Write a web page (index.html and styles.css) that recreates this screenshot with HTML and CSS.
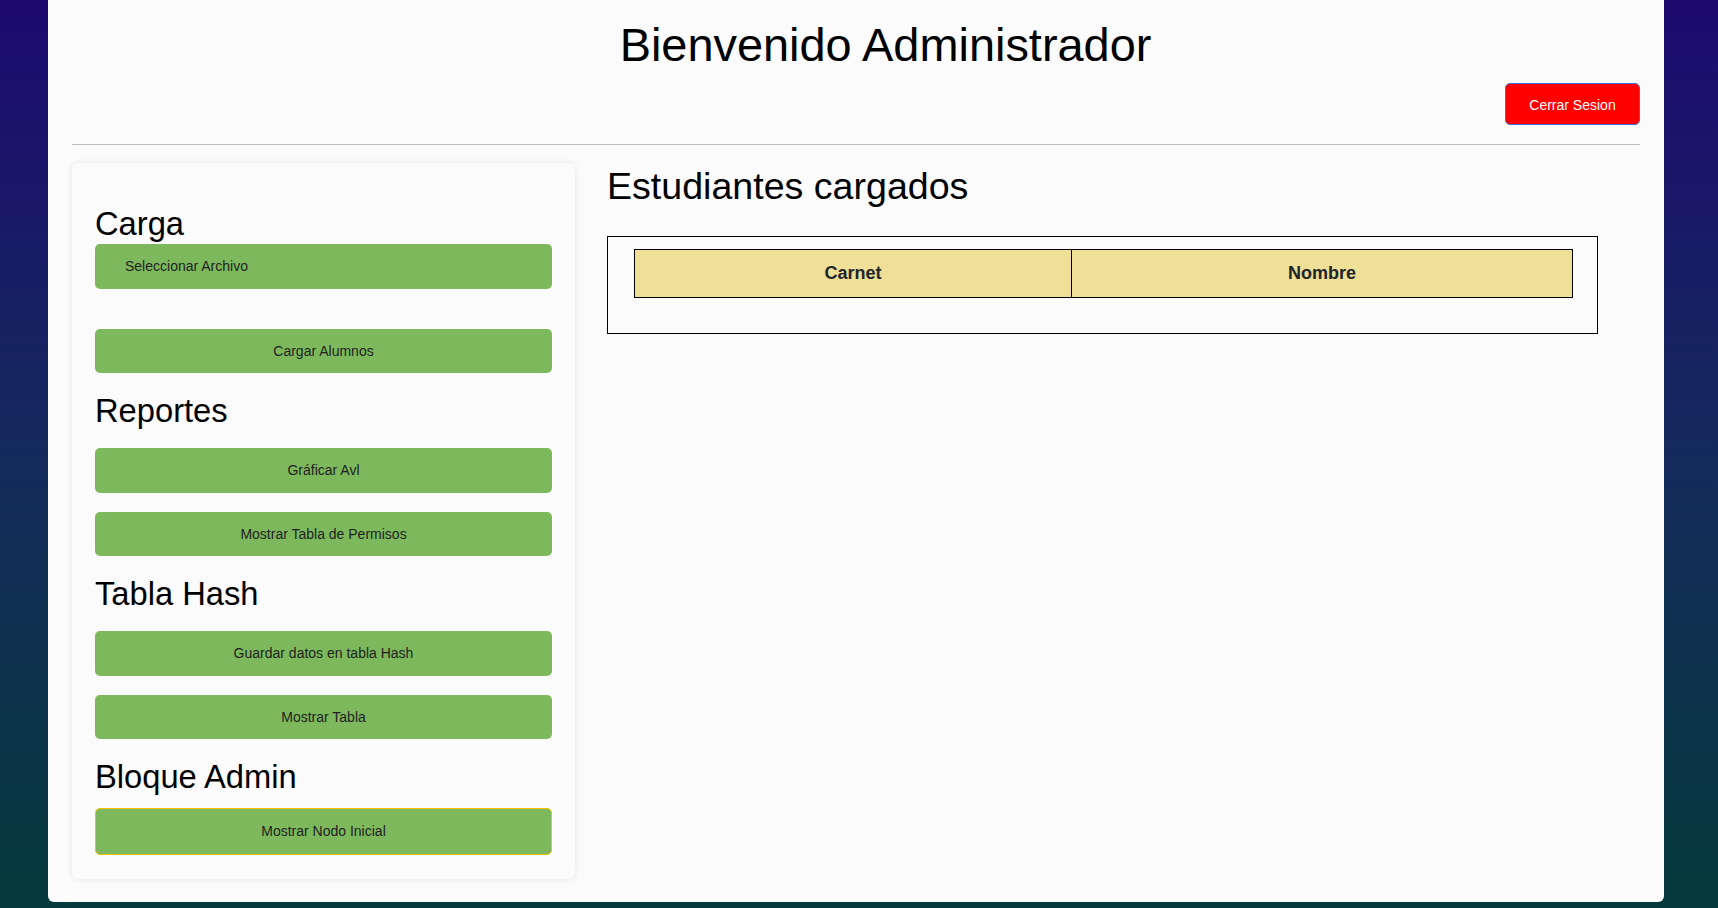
FILE: index.html
```html
<!DOCTYPE html>
<html lang="es">
<head>
<meta charset="utf-8">
<title>Administrador</title>
<link rel="stylesheet" href="styles.css">
</head>
<body>
<div class="panel">
  <header class="top">
    <h1 class="title">Bienvenido Administrador</h1>
    <div class="logout-row"><button class="logout">Cerrar Sesion</button></div>
  </header>
  <hr class="divider">
  <div class="main">
    <aside class="card">
      <h2 class="sec sec-first">Carga</h2>
      <label class="btn btn-file">Seleccionar Archivo</label>
      <button class="btn">Cargar Alumnos</button>
      <h2 class="sec">Reportes</h2>
      <button class="btn">Gráficar Avl</button>
      <button class="btn">Mostrar Tabla de Permisos</button>
      <h2 class="sec">Tabla Hash</h2>
      <button class="btn">Guardar datos en tabla Hash</button>
      <button class="btn">Mostrar Tabla</button>
      <h2 class="sec sec-last">Bloque Admin</h2>
      <button class="btn btn-node">Mostrar Nodo Inicial</button>
    </aside>
    <section class="content">
      <h2 class="content-title">Estudiantes cargados</h2>
      <div class="table-box">
        <table class="students">
          <colgroup><col class="col-carnet"><col class="col-nombre"></colgroup>
          <thead>
            <tr><th>Carnet</th><th>Nombre</th></tr>
          </thead>
          <tbody></tbody>
        </table>
      </div>
    </section>
  </div>
</div>
</body>
</html>
```
FILE: styles.css
```css
* { box-sizing: border-box; }

html, body {
  margin: 0;
  height: 908px;
}

body {
  background: linear-gradient(180deg, #1d0a70 0%, #142a5c 50%, #053a3c 100%);
  font-family: "Liberation Sans", Arial, sans-serif;
  overflow: hidden;
}

.panel {
  margin-left: 48px;
  width: 1616px;
  height: 901.5px;
  background: #fbfbfb;
  border-radius: 0 0 6px 6px;
  padding: 0 24px;
}

.top {
  display: flex;
  flex-direction: column;
}

.title {
  margin: 18px 0 0;
  padding-left: 59px;
  font-size: 46.9px;
  line-height: 54px;
  font-weight: 400;
  text-align: center;
  color: #000;
}

.logout-row {
  display: flex;
  justify-content: flex-end;
  margin-top: 11px;
}

.logout {
  width: 135px;
  height: 42px;
  background: #ff0000;
  color: #fff;
  border: 1px solid #2f6fe0;
  border-radius: 5px;
  font-family: "Liberation Sans", Arial, sans-serif;
  font-size: 14px;
  padding: 1px 0 0;
}

.divider {
  margin: 19px 0 0;
  border: 0;
  border-top: 1px solid #bcbcbc;
  height: 0;
}

.main {
  display: flex;
  gap: 32px;
  margin-top: 18px;
  align-items: flex-start;
}

.card {
  width: 503px;
  flex: none;
  display: flex;
  flex-direction: column;
  background: #fbfbfb;
  border-radius: 6px;
  box-shadow: 0 0 6px rgba(0, 0, 0, 0.09);
  padding: 42px 23px 24px;
}

.sec {
  margin: 0 0 19px;
  font-size: 32.7px;
  line-height: 37px;
  font-weight: 400;
  color: #000;
}

.sec-first { margin-bottom: 2px; }
.sec-last { margin-bottom: 13px; }

.btn {
  display: flex;
  align-items: center;
  justify-content: center;
  height: 44.5px;
  margin: 0 0 19px;
  background: #7db95c;
  border: 0;
  border-radius: 5px;
  color: #1f1f1f;
  font-family: "Liberation Sans", Arial, sans-serif;
  font-size: 14px;
  padding: 0;
}

.btn-file {
  justify-content: flex-start;
  padding-left: 30px;
  margin-bottom: 40px;
}

.btn-node {
  height: 46.5px;
  margin-bottom: 0;
  border: 1px solid #f2c200;
}

.content {
  flex: 1;
  padding-top: 1.5px;
}

.content-title {
  margin: 0;
  font-size: 37.6px;
  line-height: 42px;
  font-weight: 400;
  color: #000;
}

.table-box {
  margin-top: 29.5px;
  width: 991px;
  height: 98px;
  border: 1px solid #000;
  padding: 12px 26px 0 26px;
}

.students {
  width: 938px;
  border-collapse: collapse;
  table-layout: fixed;
}

.col-carnet { width: 437px; }
.col-nombre { width: 501px; }

.students th {
  height: 48px;
  padding: 0;
  background: #efdf97;
  border: 1px solid #000;
  font-size: 18px;
  font-weight: 700;
  color: #212529;
  text-align: center;
}
```
